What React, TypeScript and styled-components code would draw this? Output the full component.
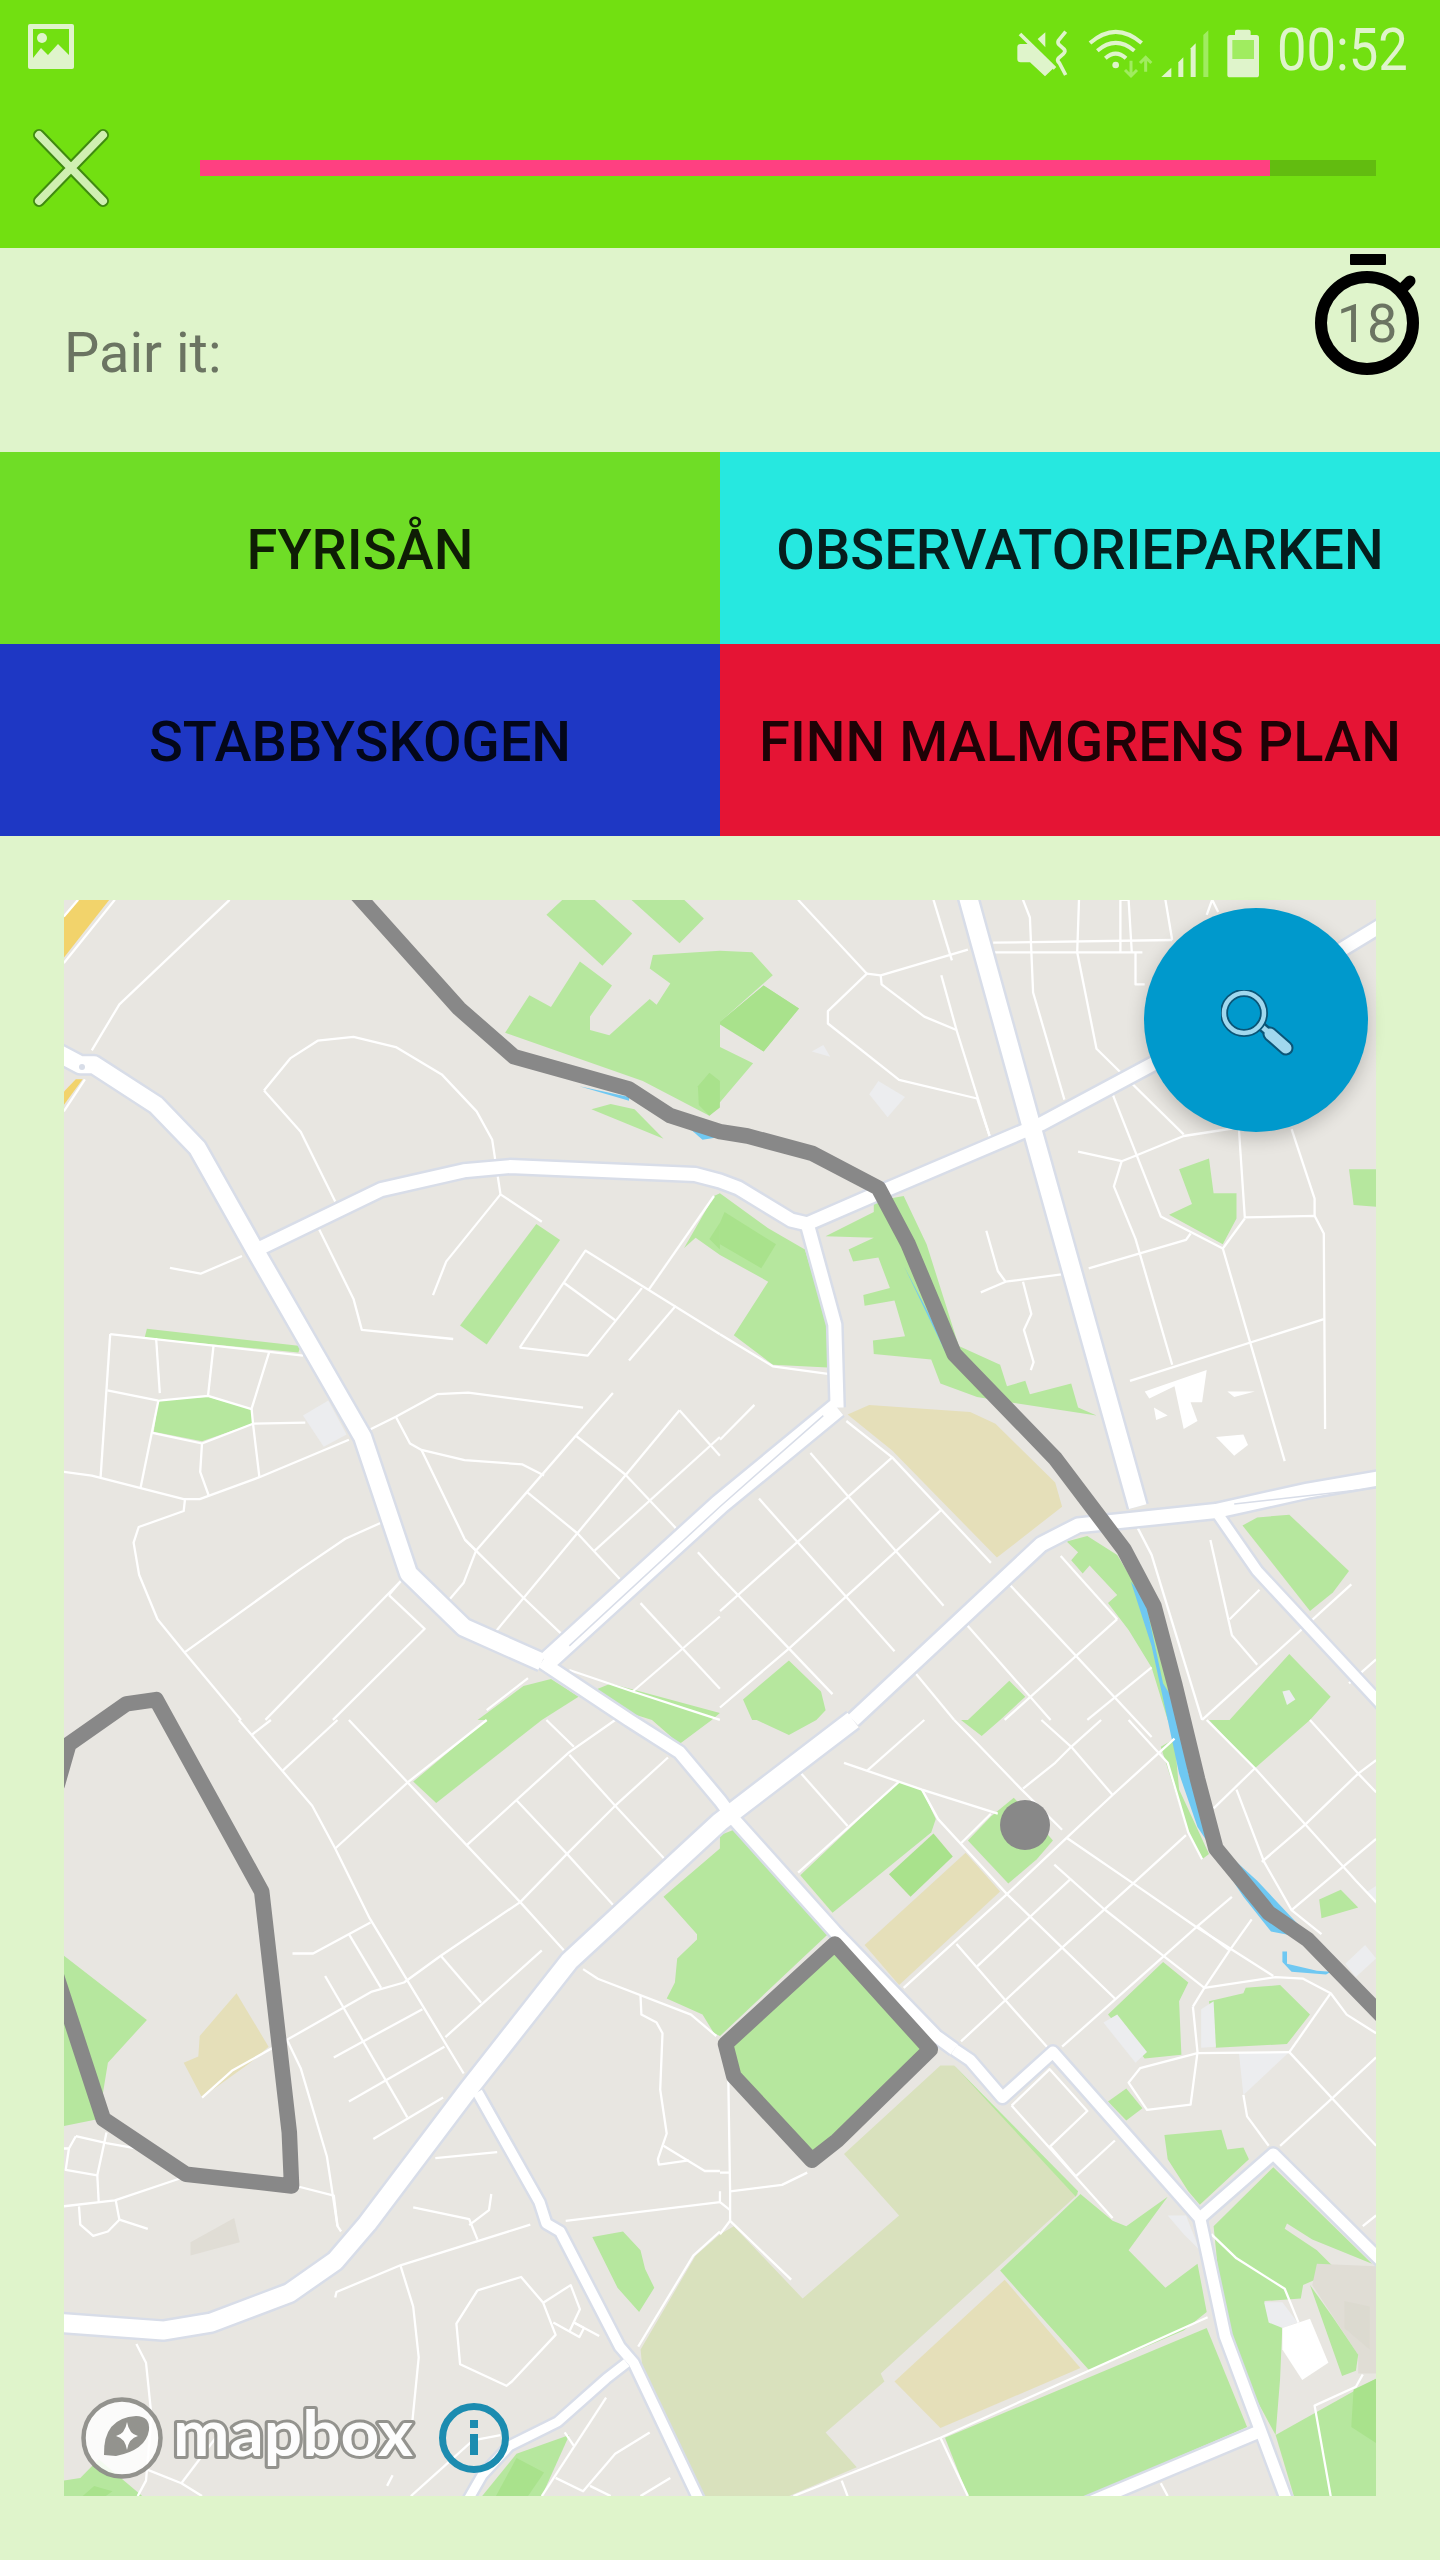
import React from 'react';
import styled, { createGlobalStyle } from 'styled-components';

const Global = createGlobalStyle`
  html, body { margin: 0; padding: 0; background: #dff4cb; }
`;

const Screen = styled.div`
  width: 1440px;
  height: 2560px;
  background: #dff4cb;
  display: flex;
  flex-direction: column;
  overflow: hidden;
  font-family: Roboto, "Liberation Sans", sans-serif;
`;
const TopBar = styled.header`
  height: 248px;
  background: #72e011;
  display: flex;
  flex-direction: column;
`;
const StatusBar = styled.div`
  height: 96px;
  padding: 24px 33px 0 28px;
  box-sizing: border-box;
  display: flex;
  justify-content: space-between;
  align-items: flex-start;
`;
const StatusRight = styled.div`
  display: flex;
  align-items: flex-start;
`;
const Clock = styled.span`
  width: 130px;
  font-size: 60px;
  font-weight: 400;
  line-height: 52px;
  color: #dff4cb;
  white-space: nowrap;
  transform: scaleX(0.875);
  transform-origin: left center;
  margin-left: 15px;
`;
const Toolbar = styled.div`
  flex: 1;
  display: flex;
  align-items: center;
  padding: 0 64px 0 33px;
  margin-top: -8px;
`;
const Track = styled.div`
  margin-left: 91px;
  flex: 1;
  height: 16px;
  background: #62bc10;
`;
const Fill = styled.div`
  height: 100%;
  background: #ff4081;
`;
const Prompt = styled.div`
  height: 204px;
  box-sizing: border-box;
  padding: 0 17px 0 64px;
  display: flex;
  align-items: center;
  justify-content: space-between;
  color: #6b7462;
`;
const PromptText = styled.span`
  font-size: 56px;
  margin-top: 6px;
`;
const Timer = styled.div`
  position: relative;
  width: 112px;
  height: 126px;
  align-self: flex-start;
  margin-top: 6px;
`;
const TimerNum = styled.span`
  position: absolute;
  left: 0;
  right: 0;
  top: 38px;
  text-align: center;
  font-size: 54px;
  font-weight: 400;
  line-height: 64px;
  color: #6b7462;
`;
const Options = styled.div`
  display: grid;
  grid-template-columns: 720px 720px;
  grid-auto-rows: 192px;
`;
const Option = styled.button<{ $bg: string }>`
  border: 0;
  padding: 3px 0 0;
  background: ${p => p.$bg};
  color: rgba(0, 0, 0, 0.87);
  font-family: inherit;
  font-size: 56px;
  font-weight: 500;
  white-space: nowrap;
`;
const MapPanel = styled.div`
  position: relative;
  margin: 64px 64px 0;
  width: 1312px;
  height: 1596px;
`;
const MapSvg = styled.svg`
  display: block;
  width: 1312px;
  height: 1596px;
`;
const Fab = styled.button`
  position: absolute;
  top: 8px;
  right: 8px;
  width: 224px;
  height: 224px;
  border-radius: 50%;
  border: 0;
  padding: 0;
  background: #0099cc;
  box-shadow: 0 6px 18px rgba(0, 0, 0, 0.2);
  display: flex;
  align-items: center;
  justify-content: center;
`;

const Q: Record<string, [number, number]> = { a: [0, 880], b: [720, 880], c: [0, 1720], d: [720, 1720] };
const P = (s: string) => {
  let q = Q.a;
  const out: string[] = [];
  s.trim().split(/\s+/).forEach(t => {
    if (Q[t]) { q = Q[t]; return; }
    const [x, y] = t.split(',').map(Number);
    out.push(`${(q[0] + x / 2.178).toFixed(1)},${(q[1] + y / 1.867).toFixed(1)}`);
  });
  return out.join(' ');
};

const C = {
  land: '#e8e6e1', green: '#b6e79e', dark: '#a9e28c', tan: '#e5dfb9', olive: '#d9e1bd',
  bldg: '#ecedef', water: '#6fc8f2', casing: '#d8dde8', patch: '#e0ddd5', patch2: '#dcdad0', route: '#888888', yellow: '#f2d36b',
};

const fills: [string, string][] = [
  [C.yellow, 'a 139,145 238,37 170,37 139,70'],
  [C.yellow, 'a 139,420 180,372 165,372 139,395'],
  [C.green, 'a 1190,65 1225,37 1295,37 1377,100 1312,160'],
  [C.green, 'a 1375,37 1490,37 1533,72 1480,118'],
  [C.green, 'a 1100,285 1153,215 1200,237 1263,152 1333,197 1285,255 1285,280 1327,290 1415,222 1430,233 1460,193 1415,165 1422,140 1568,132 b 70,135 115,178 0,265 95,320 172,240 95,197 0,265 0,312 72,342 0,415 a 1545,440 1400,375'],
  [C.dark, 'b 0,265 95,197 172,240 95,320 0,270'],
  [C.dark, 'a 1520,385 1545,360 1568,375 1568,425 1545,440 1522,420'],
  [C.green, 'a 1288,428 1330,418 1382,428 1445,483'],
  [C.green, 'a 1002,832 1168,642 1220,672 1060,867'],
  [C.green, 'a 315,855 320,838 655,870 650,882'],
  [C.green, 'a 345,970 455,965 548,988 550,1015 440,1048 335,1030'],
  [C.green, 'a 1040,1568 1140,1505 1200,1492 1260,1525 1180,1568'],
  [C.green, 'c 900,115 1060,0 1180,0 950,155'],
  [C.green, 'a 1260,1525 1330,1500 1568,1555 c 1550,0 1480,45 1420,0'],
  [C.bldg, 'a 660,1000 715,972 755,1035 705,1058'],
  [C.green, 'b 230,665 335,620 335,600 400,590 450,680 520,870 610,905 625,945 665,935 675,960 765,940 780,985 820,1000 630,975 560,965 480,940 460,895 335,885 333,860 403,852 380,785 315,795 312,775 370,762 345,705 290,712 280,690 335,668'],
  [C.green, 'a 1490,687 1555,590 1568,585 b 105,650 185,690 235,830 235,910 115,905 30,850 105,750 0,700 a 1515,668'],
  [C.dark, 'b 0,640 10,620 122,680 90,725 0,680'],
  [C.dark, 'a 1545,670 1568,640 1568,690'],
  [C.tan, 'b 278,998 325,980 545,993 600,1015 730,1125 745,1170 603,1265 375,1065'],
  [C.green, 'b 1370,540 1429,540 1429,610 1380,607'],
  [C.green, 'b 1000,540 1065,520 1075,585 1125,585 1125,632 1095,680 978,625 1028,605'],
  [C.bldg, 'b 325,400 345,375 403,405 365,443'],
  [C.bldg, 'b 200,320 225,308 240,330'],
  [C.green, 'b 755,1235 800,1225 865,1260 900,1310 945,1370 1000,1568 975,1568 940,1470 890,1400 845,1350 865,1335 805,1280 790,1295 765,1270 780,1255'],
  [C.green, 'b 1138,1205 1170,1190 1240,1185 1370,1290 1335,1330 1285,1365'],
  [C.green, 'b 50,1530 150,1457 220,1515 230,1550 210,1568 d 210,0 150,28 80,0 b 70,1568'],
  [C.green, 'b 540,1568 630,1495 665,1525 610,1568 d 570,30 525,0'],
  [C.green, 'b 1110,1568 1240,1445 1330,1525 1285,1568 d 1165,90 1065,0'],
  [C.bldg, 'b 1225,1515 1240,1512 1253,1530 1235,1540'],
  [C.water, 'b 895,1310 925,1340 965,1500 1015,1568 975,1568 940,1430'],
  [C.water, 'a 1262,385 1370,405 1370,412'],
  [C.water, 'a 1450,425 1568,480 1530,485'],
  [C.water, 'b 400,720 500,885 490,880'],
  [C.green, 'c 139,440 320,560 235,640 215,745 139,758'],
  [C.green, 'c 1290,965 1357,955 1395,990 1405,1025 1425,1060 1392,1105 1345,1060'],
  [C.tan, 'c 400,640 432,628 435,590 515,510 585,610 545,640 440,705'],
  [C.patch, 'c 415,975 510,930 522,975 415,1000'],
  [C.green, 'c 1445,330 1568,240 d 0,215 30,205 235,400 0,590 c 1555,585 1530,550 1452,520 1470,490 1475,445 1518,410 1518,400'],
  [C.green, 'c 1050,1449 1125,1370 1240,1335 1180,1449'],
  [C.dark, 'c 1080,1449 1125,1378 1185,1405 1150,1449'],
  [C.green, 'c 139,1420 175,1415 215,1380 310,1449 139,1449'],
  [C.dark, 'c 180,1449 205,1430 245,1440 230,1449'],
  [C.green, 'd 12,605 250,418 458,615 200,822 30,665'],
  [C.green, 'd 175,290 390,115 440,130 470,185 460,210 245,360'],
  [C.dark, 'd 368,288 465,212 507,255 415,330'],
  [C.tan, 'd 315,420 535,248 610,320 390,495'],
  [C.green, 'd 540,225 590,180 640,145 700,200 725,225 690,260 628,305'],
  [C.olive, 'd 270,810 480,645 510,645 780,885 350,1220 358,1235 230,1330 298,1395 150,1449 -58,1449 -168,1220 -173,1175 -53,1000 0,960 30,945 180,1080 390,925'],
  [C.green, 'd 510,645 780,880 775,890'],
  [C.tan, 'd 380,1235 620,1045 785,1210 480,1322'],
  [C.green, 'd 610,1028 785,885 855,935 885,945 975,890 890,990 970,1060 1040,1015 1060,1105 1010,1140 805,1215'],
  [C.green, 'd 490,1340 1060,1135 1148,1320 800,1449 540,1449'],
  [C.green, 'd 1075,945 1205,835 1420,1015 1290,970 1235,940 1230,950 1300,990 1335,1020 1310,1040 1270,1055 1265,1080 1185,1085 1225,1130 1220,1230 1210,1335 1100,1160'],
  [C.green, 'd 1210,1335 1429,1230 1429,1449 1250,1449'],
  [C.dark, 'd 1380,1250 1429,1230 1429,1350 1375,1320'],
  [C.patch, 'd 1300,1015 1429,1020 1429,1220 1390,1220 1390,1185 1290,1055'],
  [C.patch2, 'd 1360,1085 1415,1095 1415,1175 1360,1135'],
  [C.green, 'd 1285,1055 1335,1115 1390,1185 1385,1215 1355,1225'],
  [C.bldg, 'd 1185,1087 1225,1087 1258,1125 1225,1135 1195,1125'],
  ['#ffffff', 'd 1225,1135 1285,1118 1325,1200 1268,1232 1225,1175'],
  [C.green, 'd 845,550 965,452 1020,490 1000,525 1005,625 925,632'],
  [C.green, 'd 1065,525 1140,510 1145,500 1220,495 1285,550 1235,605 1080,612'],
  [C.bldg, 'd 1048,540 1075,525 1080,610 1048,612'],
  [C.bldg, 'd 1130,620 1240,620 1140,700'],
  [C.bldg, 'd 835,565 865,550 930,620 905,640'],
  [C.green, 'd 845,712 885,688 920,725 885,748'],
  [C.green, 'd 968,775 1092,765 1105,802 1140,798 1152,820 1045,905 1020,880 975,820'],
  [C.green, 'd 1305,335 1352,317 1390,350 1310,370'],
  [C.bldg, 'd 1362,455 1405,420 1429,445 1385,480'],
  [C.bldg, 'd 1410,320 1429,310 1429,345'],
  [C.bldg, 'd 975,925 1015,925 1045,990 1010,960'],
  [C.green, 'd 960,50 990,35 1000,130 1065,250 1050,260 1020,210'],
  [C.water, 'd 975,0 1000,0 1020,100 1080,230 1170,300 1290,410 1200,395 1140,330 1040,200 1000,100'],
  [C.water, 'd 1225,432 1235,432 1235,455 1300,468 1330,470 1320,475 1245,470 1225,452'],
  ['#ffffff', 'b 925,955 1060,915 1050,975 1025,975 1040,1010 1010,1025 990,945 935,968'],
  ['#ffffff', 'b 945,985 975,1000 950,1008'],
  ['#ffffff', 'b 1080,1040 1140,1035 1150,1055 1120,1075'],
  ['#ffffff', 'b 1105,955 1165,955 1120,965'],
];

const minors = [
  'a 139,155 250,37', 'a 139,68 170,37', 'a 139,432 185,372', 'a 200,318 260,232 500,37',
  'a 575,393 632,333 692,300 770,293 862,312 962,363 1038,432 1072,485 1090,587 1180,638',
  'a 575,393 655,470 730,600', 'a 695,652 770,782 788,840 987,857', 'a 1090,587 972,712 943,775',
  'a 370,724 437,735 527,702', 'a 240,848 660,888', 'a 240,848 219,1115', 'a 340,855 348,958',
  'a 465,870 453,963', 'a 586,882 548,987 551,1015 565,1115', 'a 234,953 345,972 453,963 548,988',
  'a 345,972 306,1135', 'a 332,1032 440,1052 551,1015 665,1013', 'a 440,1052 436,1105 455,1150',
  'a 139,1105 200,1112 400,1156 435,1156 565,1115 760,1045',
  'a 403,1156 400,1178 302,1208 291,1237 303,1297 343,1380 402,1442 525,1568',
  'a 402,1442 652,1288 752,1230 830,1200', 'a 796,1030 862,1002 952,960 1020,957 1270,985',
  'a 862,1002 893,1052 918,1064 1012,1083 1138,1091 1185,1112', 'a 918,1064 1013,1232 1140,1340 1222,1407',
  'a 1013,1232 1037,1252 1010,1312 978,1344', 'a 1335,958 1037,1252', 'a 1255,1038 1362,1110 1472,1210',
  'a 1148,1143 1258,1220 1350,1305', 'a 1480,990 1078,1405', 'a 1480,990 1568,1075', 'a 1295,1252 1568,1040',
  'a 1132,873 1275,692 1568,848', 'a 1132,873 1280,888 1398,762', 'a 1228,752 1340,822', 'a 1370,897 1472,795',
  'a 1413,765 1555,590', 'a 847,1335 877,1305 578,1568', 'a 847,1335 925,1398 725,1568',
  'a 1240,1475 1378,1515 1568,1568', 'a 1378,1515 1568,1375', 'a 1395,1350 1568,1510', 'a 1520,1255 1568,1300',
  'a 1150,1490 1060,1550',
  'b 170,37 320,175 235,245 235,268 390,373 560,408 588,480', 'b 320,175 350,178 540,130',
  'b 350,178 352,195 445,255 515,280 588,480', 'b 482,178 515,280', 'b 465,37 505,150', 'b 595,117 985,112',
  'b 595,135 920,135', 'b 660,37 675,70 682,210 750,410', 'b 782,37 778,135 820,315 1010,475', 'b 970,37 985,112',
  'b 872,135 872,37 890,37 897,135', 'b 1060,65 1072,37 1085,60', 'b 905,135 905,195 925,195',
  'b 780,507 875,525 905,515 1010,478 1130,462 1143,630 1295,627 1315,660 1318,1025',
  'b 875,525 858,572 905,670 985,905', 'b 855,400 960,628 1095,688 1143,632', 'b 1245,465 1295,595 1295,627',
  'b 1095,688 1230,1085', 'b 1025,660 1015,672 803,725', 'b 893,935 1315,820',
  'b 580,655 605,730 622,750 748,736', 'b 568,770 622,750', 'b 660,750 678,810 662,840 683,900 677,915',
  'b 0,848 115,908 235,922', 'b 0,1045 75,980', 'b 275,1010 375,1078 590,1275', 'b 197,1070 487,1355',
  'b 85,1155 380,1440', 'b 375,1078 0,1365', 'b 483,1175 150,1435 0,1545', 'b 0,1300 245,1520',
  'b 630,1315 940,1600', 'b 535,1388 720,1568', 'b 420,1475 510,1568', 'b 865,1380 620,1568', 'b 742,1262 865,1380',
  'b 940,1470 800,1568', 'b 910,1210 940,1260 1050,1568', 'b 1068,1232 1115,1410 1170,1465', 'b 1110,1380 1175,1325',
  'b 1375,1315 1050,1568', 'b 1429,1455 1370,1500',
  'd 270,80 440,130 605,175', 'd 320,95 445,0', 'd 175,98 278,198', 'd 170,285 390,115',
  'd 440,130 475,185 625,325 745,425 860,520', 'd 525,230 590,175', 'd 400,500 625,325 755,220 855,140 990,35',
  'd 560,460 762,298', 'd 525,600 745,425 900,305 1015,215', 'd 745,610 1040,385 1115,330', 'd 1055,500 1110,430 1158,372',
  'd 515,418 620,522 712,610', 'd 728,270 835,352 965,440 1055,500', 'd 755,220 900,305 1035,385 1205,478',
  'd 1055,500 1210,480 1270,483 1330,510 1365,550 1429,585', 'd 1030,535 1055,500',
  'd 1030,535 1040,620 1025,718 930,728 890,677 915,650 1040,622 1240,620', 'd 1240,620 1330,510', 'd 1240,620 1429,795',
  'd 1335,705 1429,630', 'd 1220,795 1335,705', 'd 1140,700 1148,740 1195,795', 'd 510,0 565,48 655,128 745,205',
  'd 700,0 765,50 855,140', 'd 890,0 975,80 1020,210 1050,260', 'd 765,50 730,80 660,128', 'd 830,0 765,50',
  'd 1060,0 1165,90 1275,195 1385,300 1429,340', 'd 1165,90 1075,165', 'd 1285,0 1390,100 1429,135', 'd 1390,100 1429,75',
  'd 1390,100 1275,195 1180,265', 'd 1125,130 1185,265 1245,355 1310,400', 'd 1429,222 1245,355', 'd 1110,430 1040,385',
  'd 635,720 718,652 800,730 718,797', 'd 635,720 855,930', 'd 775,852 860,785', 'd 720,797 775,852',
  'd 18,670 22,880 22,935 155,1045', 'd 22,880 135,868 190,845', 'd 0,845 22,845', 'd 0,900 22,915', 'd 0,960 22,935',
  'd 1070,960 1125,1005 1230,1062 1260,1125', 'd 1400,1222 1385,1245 1295,1280 1330,1449', 'd 160,1449 480,1340 1062,1115',
  'd 480,1340 540,1449', 'd 265,1420 278,1449', 'd 960,1425 975,1449', 'd 1400,945 1429,925',
  'c 520,0 680,160 730,240 805,370 1010,660', 'c 615,95 735,0', 'c 548,28 590,0', 'c 730,240 890,115 1060,0',
  'c 760,0 1133,340 1228,430', 'c 1125,150 1235,250 1335,345', 'c 1240,65 1340,160 1448,260', 'c 1015,235 1240,60 1340,0',
  'c 1133,340 1235,250 1340,160 1455,70', 'c 1190,0 1250,50', 'c 1270,465 1302,483 1505,550 1560,590',
  'c 1395,515 1397,550 1430,565 1443,585 1438,690 1452,772 1433,820 1435,830 1500,822', 'c 1445,795 1535,842 1568,842',
  'c 637,436 682,436 807,378', 'c 760,400 830,500', 'c 1133,340 960,440 880,490 810,507 625,597', 'c 960,440 1048,528',
  'c 1180,430 970,592', 'c 708,478 887,742', 'c 920,540 727,630', 'c 968,610 760,712', 'c 965,705 813,782',
  'c 625,597 655,650 712,815 735,945 743,955', 'c 440,705 505,655 625,597',
  'c 165,777 232,790 330,805', 'c 139,800 150,800 165,777', 'c 150,800 143,840 212,850 232,770', 'c 212,850 215,900',
  'c 139,908 250,897 395,855', 'c 172,908 175,942 203,963 235,955 260,933 322,950', 'c 260,933 252,897', 'c 645,870 727,888 735,945',
  'c 948,818 1083,807', 'c 900,910 1022,932 1040,970', 'c 1022,943 1065,915 1070,885', 'c 730,1078 733,1068 872,1018 1155,942',
  'c 1232,935 1568,900 d 0,880', 'c 872,1018 900,1095 912,1190 897,1320', 'c 855,1410 843,1430',
  'c 1040,1065 1135,1040 1183,1088 1210,1148 1115,1235 1103,1243 1002,1203 994,1127 1040,1065',
  'c 1183,1088 1243,1055 1263,1100 1240,1142', 'c 1205,1125 1262,1152 1272,1135 1250,1125', 'c 1250,1125 1305,1150',
  'c 297,1165 318,1200 330,1300 318,1420 300,1449', 'c 322,1400 395,1425 440,1449', 'c 395,1425 470,1340',
  'c 895,1449 1030,1345 1090,1335', 'c 1320,1265 1180,1449', 'c 1210,1415 1270,1440 1340,1370 1415,1330', 'c 1285,1430 1330,1449',
  'c 1395,1449 1460,1415', 'c 1230,1330 1250,1355', 'c 1390,1170 1510,1000 1568,955',
];

const roads: [number, string][] = [
  [17, 'a 120,320 175,345 205,345 340,420 430,500 555,690 790,1040 890,1295 1010,1395 1180,1460'],
  [12, 'a 1180,1460 1370,1568 c 1370,0 1480,60 1568,150 d 30,185 250,395 470,590 510,615'],
  [11, 'd 510,615 545,635 615,705 725,620 1045,930 1100,1150 1240,1470'],
  [11, 'd 1045,930 1205,810 1450,1018'],
  [13, 'a 560,690 830,578 1010,543 1110,535 1515,550 1568,562 b 40,575 155,635 190,642 330,590 700,455 940,345 1450,80'],
  [13, 'b 190,642 250,830 255,985'],
  [19, 'a 1190,1460 1568,1165 b 255,985'],
  [18, 'b 530,0 680,465 910,1170'],
  [18, 'c 120,1125 355,1140 460,1125 630,1070 730,1010 800,940 1020,690 1240,450 1568,190 d 290,0'],
  [14, 'd 290,0 b 700,1240 780,1205 1080,1178 1280,1140 1450,1115'],
  [10, 'c 1040,695 1175,900 1190,940 1220,955 1350,1170 1380,1200 1530,1470'],
  [9, 'c 1365,1200 1320,1230 1215,1310 1110,1355 1050,1410 1010,1470'],
  [10, 'b 1085,1185 1170,1290 1450,1548'],
  [12, 'd 1170,1330 780,1470'],
];

const routes = [
  'a 770,20 1000,240 1120,330 1370,390 1460,440 1568,470 b 60,478 200,510 345,575 410,680 510,885 730,1080 880,1250 945,1355 990,1500 d 1040,110 1080,240 1195,360 1280,410 1450,560',
  'c 125,120 150,45 275,-30 340,-38 570,320 630,770 635,870 405,848 225,745 120,470',
  'd 250,418 458,615 255,785 200,822 30,665 12,605 250,418',
];

const StatusImage = () => (
  <svg width="46" height="45" viewBox="0 0 46 45" style={{ display: 'block' }}>
    <rect width="46" height="45" rx="2" fill="#dff4cb" />
    <rect x="5" y="5" width="36" height="30" fill="#72e011" />
    <ellipse cx="14" cy="14" rx="5" ry="5" fill="#dff4cb" />
    <path d="M5 34 L13 24 L20 31 L30 20 L41 31 V40 H5 Z" fill="#dff4cb" />
  </svg>
);

const StatusIcons = () => (
  <svg width="247" height="56" viewBox="45 55 741 168" style={{ display: 'block', flex: 'none' }}>
    <path d="M52 125 Q52 115 62 115 H85 L165 183 L135 212 L90 170 H62 Q52 170 52 160 Z" fill="#dff4cb" />
    <path d="M113 100 L136 80 V125 Z" fill="#dff4cb" />
    <path d="M60 85 L160 185" stroke="#72e011" strokeWidth="8" transform="translate(9,-9)" />
    <path d="M60 85 L165 188" stroke="#dff4cb" strokeWidth="11" />
    <path d="M197 78 L175 105 Q172 112 178 118 L192 130 Q198 137 190 145 L175 158 Q170 165 178 172 L197 208" fill="none" stroke="#dff4cb" strokeWidth="11" />
    <path d="M270 112 Q347 45 425 112" fill="none" stroke="#dff4cb" strokeWidth="12" />
    <path d="M292 135 Q347 88 403 135" fill="none" stroke="#dff4cb" strokeWidth="12" />
    <path d="M316 158 Q347 130 378 158" fill="none" stroke="#dff4cb" strokeWidth="12" />
    <circle cx="347" cy="178" r="10" fill="#dff4cb" />
    <path d="M393 165 V205 M375 193 L393 211 L411 193" fill="none" stroke="#a0ec60" strokeWidth="9" />
    <path d="M437 198 V158 M420 172 L437 155 L454 172" fill="none" stroke="#a0ec60" strokeWidth="9" />
    <path d="M484 214 L514 186 V214 Z" fill="#dff4cb" />
    <path d="M535 170 L550 155 V214 H535 Z" fill="#dff4cb" />
    <path d="M572 128 L587 113 V214 H572 Z" fill="#dff4cb" />
    <path d="M610 88 L625 74 V214 H610 Z" fill="#a0ec60" />
    <path d="M682 96 Q682 88 690 88 H705 V78 Q705 72 711 72 H746 Q752 72 752 78 V88 H769 Q777 88 777 96 V207 Q777 215 769 215 H690 Q682 215 682 207 Z" fill="#dff4cb" />
    <rect x="697" y="103" width="65" height="57" fill="#a0ec60" />
  </svg>
);

const CloseIcon = () => (
  <svg width="76" height="78" viewBox="0 0 76 78" style={{ display: 'block', flex: 'none' }}>
    <path d="M6 6 L70 72 M70 6 L6 72" stroke="#3f8a10" strokeWidth="12" strokeLinecap="round" />
    <path d="M6 6 L70 72 M70 6 L6 72" stroke="#d0f0b2" strokeWidth="8" strokeLinecap="round" />
  </svg>
);

const Stopwatch = () => (
  <svg width="112" height="126" viewBox="0 0 112 126" style={{ display: 'block' }}>
    <rect x="39" y="0" width="36" height="11" rx="1" fill="#000" />
    <circle cx="56" cy="69" r="46" fill="none" stroke="#000" strokeWidth="12" />
    <path d="M92 34 L99 27" stroke="#000" strokeWidth="11" strokeLinecap="round" />
  </svg>
);

const SearchIcon = () => (
  <svg width="96" height="72" viewBox="0 0 96 72" style={{ display: 'block', marginTop: 12, marginLeft: 26 }}>
    <path d="M39 35 L46 41" stroke="#0a5577" strokeWidth="10" />
    <path d="M49 44 L65 58" stroke="#0a5577" strokeWidth="15" strokeLinecap="round" />
    <path d="M49 44 L65 58" stroke="#a0d8ee" strokeWidth="11" strokeLinecap="round" />
    <path d="M39 35 L47 42" stroke="#a0d8ee" strokeWidth="5" />
    <circle cx="23" cy="23" r="20" fill="none" stroke="#0a5577" strokeWidth="8" />
    <circle cx="23" cy="23" r="20" fill="none" stroke="#a0d8ee" strokeWidth="4.5" />
  </svg>
);

const MapDrawing = () => (
  <MapSvg viewBox="64 900 1312 1596">
    <rect x="64" y="900" width="1312" height="1596" fill={C.land} />
    {fills.map(([c, p], i) => <polygon key={i} points={P(p)} fill={c} />)}
    <g fill="none" stroke="#ffffff" strokeWidth="2.3" strokeLinejoin="round">
      {minors.map((p, i) => <polyline key={i} points={P(p)} />)}
    </g>
    <g fill="none" stroke={C.casing} strokeLinejoin="round">
      {roads.map(([w, p], i) => <polyline key={i} points={P(p)} strokeWidth={w + 5} />)}
    </g>
    <g fill="none" stroke="#ffffff" strokeLinejoin="round">
      {roads.map(([w, p], i) => <polyline key={i} points={P(p)} strokeWidth={w} />)}
    </g>
    <polyline points={P('a 1240,1430 1568,1170 b 225,1000')} fill="none" stroke={C.casing} strokeWidth="1.5" />
    <polyline points={P('b 1120,1165 1429,1135')} fill="none" stroke={C.casing} strokeWidth="1.5" />
    <circle cx="82" cy="1067" r="3" fill={C.casing} />
    <g fill="none" stroke={C.route} strokeWidth="15.5" strokeLinejoin="round" strokeLinecap="round">
      {routes.map((p, i) => <polyline key={i} points={P(p)} />)}
    </g>
    <circle cx="1025" cy="1825" r="25" fill={C.route} />
    <g opacity="0.95">
      <circle cx="122" cy="2438" r="38.5" fill="#ffffff" fillOpacity="0.9" stroke="#8f8f8a" strokeWidth="4.5" />
      <path d="M104 2455 Q103 2418 136 2416 Q150 2416 149 2430 Q146 2450 116 2456 Z" fill="#8f8f8a" />
      <path d="M127 2422 Q129 2434 138 2436 Q129 2438 127 2450 Q125 2438 116 2436 Q125 2434 127 2422 Z" fill="#ffffff" />
      <text x="173" y="2456" fontFamily="Lato, Roboto, sans-serif" fontWeight="700" fontSize="64" textLength="240" lengthAdjust="spacingAndGlyphs" fill="#ffffff" stroke="#8f8f8a" strokeWidth="6" strokeLinejoin="round" paintOrder="stroke">mapbox</text>
    </g>
    <circle cx="474" cy="2438" r="31.5" fill="none" stroke="#1c8cb0" strokeWidth="7" />
    <rect x="470" y="2420" width="8" height="8" fill="#1c8cb0" />
    <rect x="470" y="2434" width="8" height="21" fill="#1c8cb0" />
  </MapSvg>
);

export default function App() {
  const progress = 91;
  return (
    <Screen>
      <Global />
      <TopBar>
        <StatusBar>
          <StatusImage />
          <StatusRight>
            <StatusIcons />
            <Clock>00:52</Clock>
          </StatusRight>
        </StatusBar>
        <Toolbar>
          <CloseIcon />
          <Track><Fill style={{ width: `${progress}%` }} /></Track>
        </Toolbar>
      </TopBar>
      <Prompt>
        <PromptText>Pair it:</PromptText>
        <Timer>
          <Stopwatch />
          <TimerNum>18</TimerNum>
        </Timer>
      </Prompt>
      <Options>
        <Option $bg="#6fdd26">FYRISÅN</Option>
        <Option $bg="#26e8e0">OBSERVATORIEPARKEN</Option>
        <Option $bg="#1e37c4">STABBYSKOGEN</Option>
        <Option $bg="#e51434">FINN MALMGRENS PLAN</Option>
      </Options>
      <MapPanel>
        <MapDrawing />
        <Fab aria-label="Search"><SearchIcon /></Fab>
      </MapPanel>
    </Screen>
  );
}
